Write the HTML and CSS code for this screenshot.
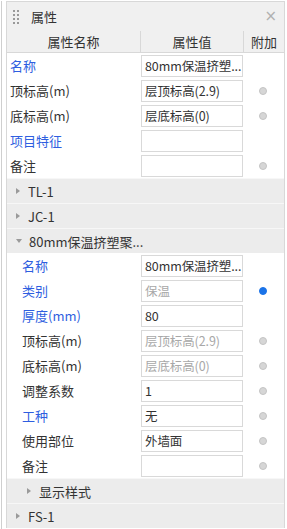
FILE: index.html
```html
<!DOCTYPE html>
<html>
<head>
<meta charset="utf-8">
<link rel="stylesheet" href="styles.css">
</head>
<body>
<div class="outer">
  <div class="panel">
    <div class="titlebar">
      <span class="grip"><i></i><i></i><i></i><i></i><i></i><i></i><i></i><i></i></span>
      <span class="title">属性</span>
      <span class="close">×</span>
    </div>
    <div class="colhead">
      <div class="c1">属性名称</div>
      <div class="c2">属性值</div>
      <div class="c3">附加</div>
    </div>

    <div class="row"><div class="c1 lab blue">名称</div><div class="c2"><div class="inp">80mm保温挤塑...</div></div><div class="c3"></div></div>
    <div class="row"><div class="c1 lab">顶标高(m)</div><div class="c2"><div class="inp">层顶标高(2.9)</div></div><div class="c3"><span class="dot"></span></div></div>
    <div class="row"><div class="c1 lab">底标高(m)</div><div class="c2"><div class="inp">层底标高(0)</div></div><div class="c3"><span class="dot"></span></div></div>
    <div class="row"><div class="c1 lab blue">项目特征</div><div class="c2"><div class="inp"></div></div><div class="c3"></div></div>
    <div class="row"><div class="c1 lab">备注</div><div class="c2"><div class="inp"></div></div><div class="c3"><span class="dot"></span></div></div>

    <div class="group"><span class="tri right"></span>TL-1</div>
    <div class="group"><span class="tri right"></span>JC-1</div>
    <div class="group"><span class="tri down"></span>80mm保温挤塑聚...</div>

    <div class="row sub"><div class="c1 lab blue">名称</div><div class="c2"><div class="inp">80mm保温挤塑...</div></div><div class="c3"></div></div>
    <div class="row sub"><div class="c1 lab blue">类别</div><div class="c2"><div class="inp dis">保温</div></div><div class="c3"><span class="dot on"></span></div></div>
    <div class="row sub"><div class="c1 lab blue">厚度(mm)</div><div class="c2"><div class="inp">80</div></div><div class="c3"></div></div>
    <div class="row sub"><div class="c1 lab">顶标高(m)</div><div class="c2"><div class="inp dis">层顶标高(2.9)</div></div><div class="c3"><span class="dot"></span></div></div>
    <div class="row sub"><div class="c1 lab">底标高(m)</div><div class="c2"><div class="inp dis">层底标高(0)</div></div><div class="c3"><span class="dot"></span></div></div>
    <div class="row sub"><div class="c1 lab">调整系数</div><div class="c2"><div class="inp">1</div></div><div class="c3"><span class="dot"></span></div></div>
    <div class="row sub"><div class="c1 lab blue">工种</div><div class="c2"><div class="inp">无</div></div><div class="c3"><span class="dot"></span></div></div>
    <div class="row sub"><div class="c1 lab">使用部位</div><div class="c2"><div class="inp">外墙面</div></div><div class="c3"><span class="dot"></span></div></div>
    <div class="row sub"><div class="c1 lab">备注</div><div class="c2"><div class="inp"></div></div><div class="c3"><span class="dot"></span></div></div>

    <div class="group subgroup"><span class="tri right"></span>显示样式</div>
    <div class="group"><span class="tri right"></span>FS-1</div>
  </div>
</div>
</body>
</html>
```

FILE: styles.css
```css
* { box-sizing: border-box; }
html, body { margin: 0; padding: 0; background: #fff; }
body {
  font-family: "Noto Sans CJK SC", "Noto Sans", sans-serif;
  font-size: 13px;
  color: #333;
}
.outer {
  margin-left: 1px;
  border-left: 1px solid #cfcfcf;
  padding-left: 4px;
  height: 529px;
}
.panel {
  width: 279px;
  margin-top: 1px;
  border: 1px solid #d8d8d8;
  border-bottom: none;
}
.titlebar {
  height: 29px;
  background: #f0f0f0;
  display: flex;
  align-items: center;
}
.grip {
  display: grid;
  grid-template-columns: 2px 2px;
  column-gap: 2px;
  row-gap: 2px;
  margin-left: 6px;
  margin-right: 12px;
}
.grip i { display: block; width: 2px; height: 2px; background: #9a9a9a; }
.title { line-height: 1; }
.close {
  margin-left: auto;
  margin-right: 7px;
  color: #b0b0b0;
  font-family: "DejaVu Sans", sans-serif;
  font-size: 15px;
  line-height: 1;
}
.colhead {
  display: flex;
  height: 22px;
  background: #f0f0f0;
  border-bottom: 1px solid #d8d8d8;
  line-height: 21px;
}
.colhead > div { text-align: center; }
.colhead .c2, .colhead .c3 { border-left: 1px solid #d8d8d8; }
.c1 { width: 133px; }
.c2 { width: 103px; }
.c3 { width: 41px; display: flex; align-items: center; justify-content: center; }
.row {
  display: flex;
  height: 25px;
  align-items: center;
}
.lab { padding-left: 3px; white-space: nowrap; }
.sub .lab { padding-left: 15px; }
.blue { color: #2e5ee0; }
.inp {
  margin-left: 1px;
  width: 102px;
  height: 22px;
  border: 1px solid #d9d9d9;
  padding-left: 3px;
  line-height: 20px;
  white-space: nowrap;
  overflow: hidden;
  color: #333;
  font-size: 12.5px;
  letter-spacing: -0.1px;
}
.inp.dis { color: #a8a8a8; }
.dot {
  width: 8px; height: 8px;
  border-radius: 50%;
  background: #d6d6d6;
  border: 1px solid #c4c4c4;
  margin-left: -1px;
}
.dot.on { background: #1a73e8; border-color: #1a73e8; }
.group {
  height: 25px;
  background: #ececec;
  border-top: 1px solid #f7f7f7;
  display: flex;
  align-items: center;
  padding-left: 9px;
  color: #333;
}
.subgroup { padding-left: 20px; }
.tri {
  width: 0; height: 0;
  margin-right: 8px;
}
.tri.right {
  border-top: 3px solid transparent;
  border-bottom: 3px solid transparent;
  border-left: 4px solid #9a9a9a;
}
.tri.down {
  border-left: 3px solid transparent;
  border-right: 3px solid transparent;
  border-top: 4px solid #9a9a9a;
  margin-right: 7px;
}
```
